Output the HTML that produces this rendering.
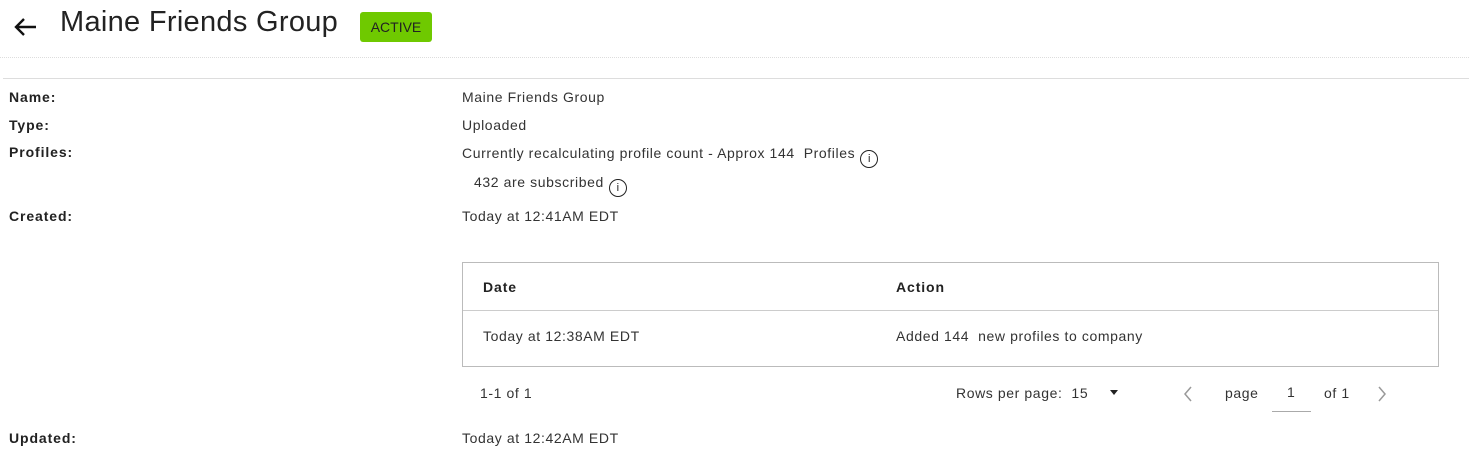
<!DOCTYPE html>
<html><head><style>
body{margin:0;width:1469px;height:456px;background:#fff;font-family:"Liberation Sans",sans-serif;color:#333;position:relative;overflow:hidden}
.a{position:absolute;white-space:nowrap}
.t{font-size:14px;letter-spacing:0.6px}
.b{font-weight:bold;font-size:14px;color:#222;letter-spacing:0.9px}
.i{display:inline-block;width:16px;height:16px;border:1.4px solid #222;border-radius:50%;font-size:11px;line-height:16px;text-align:center;vertical-align:-4px;margin-left:5px;color:#222;letter-spacing:0}
</style></head><body>
<svg class="a" style="left:12px;top:16px" width="26" height="22" viewBox="0 0 26 22"><path d="M24 11H4M12 3L4 11l8 8" stroke="#111" stroke-width="2.4" fill="none"/></svg>
<div class="a" style="left:60px;top:6px;font-size:29px;color:#222;letter-spacing:0.3px">Maine Friends Group</div>
<div class="a" style="left:360px;top:12px;width:72px;height:30px;background:#6fc900;border-radius:3px;font-size:14px;line-height:30px;text-align:center;color:#222">ACTIVE</div>
<div class="a" style="left:0;top:57px;width:1469px;border-top:1px dotted #ddd"></div>
<div class="a" style="left:3px;top:78px;width:1466px;border-top:1px solid #ddd"></div>
<div class="a b" style="left:9px;top:89px">Name:</div>
<div class="a b" style="left:9px;top:117px">Type:</div>
<div class="a b" style="left:9px;top:144px">Profiles:</div>
<div class="a b" style="left:9px;top:208px">Created:</div>
<div class="a b" style="left:9px;top:430px">Updated:</div>
<div class="a t" style="left:462px;top:89px">Maine Friends Group</div>
<div class="a t" style="left:462px;top:117px">Uploaded</div>
<div class="a t" style="left:462px;top:145px">Currently recalculating profile count - Approx 144 &nbsp;Profiles<span class="i">i</span></div>
<div class="a t" style="left:474px;top:174px">432 are subscribed<span class="i">i</span></div>
<div class="a t" style="left:462px;top:208px">Today at 12:41AM EDT</div>
<div class="a" style="left:462px;top:262px;width:975px;height:103px;border:1px solid #bbb"></div>
<div class="a" style="left:463px;top:310px;width:975px;border-top:1px solid #ccc"></div>
<div class="a b" style="left:483px;top:279px">Date</div>
<div class="a b" style="left:896px;top:279px">Action</div>
<div class="a t" style="left:483px;top:328px">Today at 12:38AM EDT</div>
<div class="a t" style="left:896px;top:328px">Added 144 &nbsp;new profiles to company</div>
<div class="a t" style="left:480px;top:385px">1-1 of 1</div>
<div class="a t" style="left:956px;top:385px">Rows per page:&nbsp; 15</div>
<div class="a" style="left:1110px;top:390px;width:0;height:0;border-left:4px solid transparent;border-right:4px solid transparent;border-top:5px solid #222"></div>
<svg class="a" style="left:1182px;top:385px" width="12" height="18" viewBox="0 0 12 18"><path d="M9 2L3 9l6 7" stroke="#999" stroke-width="1.5" fill="none"/></svg>
<div class="a t" style="left:1225px;top:385px">page</div>
<div class="a t" style="left:1287px;top:384px">1</div>
<div class="a" style="left:1272px;top:411px;width:39px;border-top:1px solid #aaa"></div>
<div class="a t" style="left:1324px;top:385px">of 1</div>
<svg class="a" style="left:1376px;top:385px" width="12" height="18" viewBox="0 0 12 18"><path d="M3 2l6 7-6 7" stroke="#999" stroke-width="1.5" fill="none"/></svg>
<div class="a t" style="left:462px;top:430px">Today at 12:42AM EDT</div>
</body></html>
